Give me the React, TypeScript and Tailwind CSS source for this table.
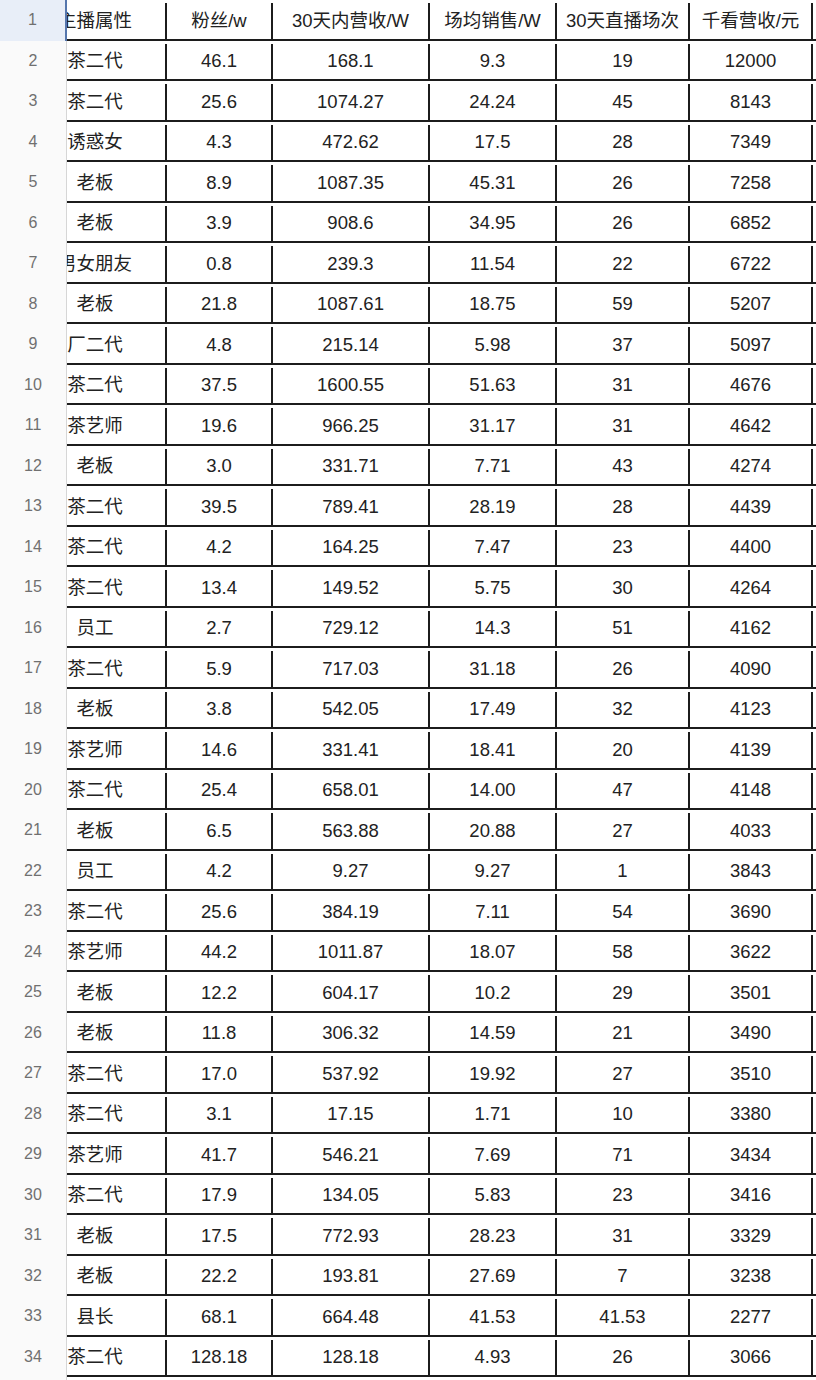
import React from "react"

type Row = [string, string, string, string, string, string]

const rows: Row[] = [
  ["茶二代", "46.1", "168.1", "9.3", "19", "12000"],
  ["茶二代", "25.6", "1074.27", "24.24", "45", "8143"],
  ["诱惑女", "4.3", "472.62", "17.5", "28", "7349"],
  ["老板", "8.9", "1087.35", "45.31", "26", "7258"],
  ["老板", "3.9", "908.6", "34.95", "26", "6852"],
  ["男女朋友", "0.8", "239.3", "11.54", "22", "6722"],
  ["老板", "21.8", "1087.61", "18.75", "59", "5207"],
  ["厂二代", "4.8", "215.14", "5.98", "37", "5097"],
  ["茶二代", "37.5", "1600.55", "51.63", "31", "4676"],
  ["茶艺师", "19.6", "966.25", "31.17", "31", "4642"],
  ["老板", "3.0", "331.71", "7.71", "43", "4274"],
  ["茶二代", "39.5", "789.41", "28.19", "28", "4439"],
  ["茶二代", "4.2", "164.25", "7.47", "23", "4400"],
  ["茶二代", "13.4", "149.52", "5.75", "30", "4264"],
  ["员工", "2.7", "729.12", "14.3", "51", "4162"],
  ["茶二代", "5.9", "717.03", "31.18", "26", "4090"],
  ["老板", "3.8", "542.05", "17.49", "32", "4123"],
  ["茶艺师", "14.6", "331.41", "18.41", "20", "4139"],
  ["茶二代", "25.4", "658.01", "14.00", "47", "4148"],
  ["老板", "6.5", "563.88", "20.88", "27", "4033"],
  ["员工", "4.2", "9.27", "9.27", "1", "3843"],
  ["茶二代", "25.6", "384.19", "7.11", "54", "3690"],
  ["茶艺师", "44.2", "1011.87", "18.07", "58", "3622"],
  ["老板", "12.2", "604.17", "10.2", "29", "3501"],
  ["老板", "11.8", "306.32", "14.59", "21", "3490"],
  ["茶二代", "17.0", "537.92", "19.92", "27", "3510"],
  ["茶二代", "3.1", "17.15", "1.71", "10", "3380"],
  ["茶艺师", "41.7", "546.21", "7.69", "71", "3434"],
  ["茶二代", "17.9", "134.05", "5.83", "23", "3416"],
  ["老板", "17.5", "772.93", "28.23", "31", "3329"],
  ["老板", "22.2", "193.81", "27.69", "7", "3238"],
  ["县长", "68.1", "664.48", "41.53", "41.53", "2277"],
  ["茶二代", "128.18", "128.18", "4.93", "26", "3066"],
]

const header: Row = ["主播属性", "粉丝/w", "30天内营收/W", "场均销售/W", "30天直播场次", "千看营收/元"]

const font = { fontFamily: '"Liberation Sans", "Noto Sans CJK SC", sans-serif' }

const SheetRow = ({ n, cells, head }: { n: number; cells: Row; head?: boolean }) => (
  <div className="flex h-[40.5px]">
    <div
      className={
        head
          ? "w-[67px] shrink-0 flex items-center justify-center text-[16px] text-[#707070] bg-[#e8eef8] border-r-2 border-[#5576ad]"
          : "w-[67px] shrink-0 flex items-center justify-center text-[16px] text-[#707070] bg-[#fafafa] border-r border-[#d6d6d6]"
      }
    >
      {n}
    </div>
    <div className="flex flex-1 border-b-2 border-[#1c1c1c] text-[18.5px] text-[#222] pt-[3px]">
      {/* first column is scrolled, text gets clipped on the left */}
      <div className="w-[100px] shrink-0 overflow-hidden border-r-2 border-[#1c1c1c] flex items-center">
        <div className="w-[144px] shrink-0 ml-[-44px] text-center whitespace-nowrap">{cells[0]}</div>
      </div>
      <div className="w-[106px] shrink-0 border-r-2 border-[#1c1c1c] flex items-center justify-center whitespace-nowrap">
        {cells[1]}
      </div>
      <div className="w-[157px] shrink-0 border-r-2 border-[#1c1c1c] flex items-center justify-center whitespace-nowrap">
        {cells[2]}
      </div>
      <div className="w-[127px] shrink-0 border-r-2 border-[#1c1c1c] flex items-center justify-center whitespace-nowrap">
        {cells[3]}
      </div>
      <div className="w-[133px] shrink-0 border-r-2 border-[#1c1c1c] flex items-center justify-center whitespace-nowrap">
        {cells[4]}
      </div>
      <div className="w-[123px] shrink-0 border-r-2 border-[#1c1c1c] flex items-center justify-center whitespace-nowrap">
        {cells[5]}
      </div>
      <div className="flex-1 bg-white" />
    </div>
  </div>
)

export default function App() {
  return (
    <div className="w-[816px] h-[1380px] overflow-hidden bg-white" style={font}>
      <SheetRow n={1} cells={header} head />
      {rows.map((r, i) => (
        <SheetRow key={i} n={i + 2} cells={r} />
      ))}
      <div className="flex h-full">
        <div className="w-[67px] bg-[#fafafa] border-r border-[#d6d6d6]" />
      </div>
    </div>
  )
}
